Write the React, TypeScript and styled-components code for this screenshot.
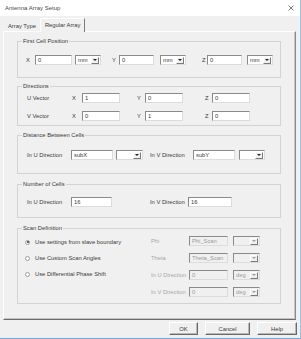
import React from "react";
import styled, { createGlobalStyle } from "styled-components";

const Global = createGlobalStyle`
  html, body { margin: 0; padding: 0; background: #ffffff; }
  body {
    width: 301px; height: 339px; overflow: hidden;
    font-family: "Liberation Sans", Arial, sans-serif;
  }
`;

const Window = styled.div`
  width: 301px; height: 339px; box-sizing: border-box;
  background: #f0f0f0;
  border-right: 1px solid #9fc3e6;
  border-bottom: 1px solid #6fa6dc;
  display: flex; flex-direction: column;
  font-size: 5.8px; color: #3a3a3a;
`;

const TitleBar = styled.div`
  height: 16px; flex: none; background: #ffffff;
  display: flex; align-items: center; justify-content: space-between;
  padding: 0 6px 0 5px;
`;

const TitleText = styled.span`
  font-size: 6px; color: #4a4a4a;
`;

const TabStrip = styled.div`
  height: 15px; flex: none;
  display: flex; align-items: flex-end;
  padding-left: 4px;
`;

const Tab = styled.div<{ $active?: boolean }>`
  box-sizing: border-box;
  height: ${(p) => (p.$active ? 14 : 12)}px;
  padding: 0 ${(p) => (p.$active ? 4 : 3)}px;
  display: flex; align-items: center;
  padding-bottom: ${(p) => (p.$active ? 2 : 0)}px;
  background: #f0f0f0;
  border-top: 1px solid ${(p) => (p.$active ? "#ffffff" : "transparent")};
  border-left: 1px solid ${(p) => (p.$active ? "#ffffff" : "transparent")};
  border-right: 1px solid ${(p) => (p.$active ? "#7c7c7c" : "transparent")};
  margin-bottom: ${(p) => (p.$active ? -1 : 0)}px;
  position: relative; z-index: ${(p) => (p.$active ? 1 : 0)};
`;

const Panel = styled.div`
  box-sizing: border-box;
  margin: 0 4px 0 3px;
  height: 289px; flex: none;
  border-top: 1px solid #ffffff;
  border-left: 1px solid #ffffff;
  border-right: 1px solid #8a8a8a;
  border-bottom: 1px solid #6a6a6a;
  box-shadow: inset -1px -1px 0 #c4c4c4;
  padding: 9px 14px 0 13px;
  display: flex; flex-direction: column;
`;

const GroupBox = styled.div<{ $mt?: number; $pt: number; $pb: number; $pl?: number }>`
  position: relative;
  box-sizing: border-box;
  margin-top: ${(p) => p.$mt ?? 0}px;
  border: 1px solid #d3d3d3;
  padding: ${(p) => p.$pt}px 4px ${(p) => p.$pb}px ${(p) => p.$pl ?? 9}px;
  display: flex; flex-direction: column;
`;

const Caption = styled.span`
  position: absolute; top: -4px; left: 4px;
  padding: 0 1px; background: #f0f0f0;
  line-height: 7px; white-space: nowrap;
`;

const Stack = styled.div<{ $gap: number }>`
  display: flex; flex-direction: column; gap: ${(p) => p.$gap}px;
`;

const Row = styled.div`
  display: flex; align-items: center; height: 10px;
`;

const Label = styled.span<{ $w: number; $ml?: number; $dim?: boolean }>`
  flex: none; width: ${(p) => p.$w}px; margin-left: ${(p) => p.$ml ?? 0}px;
  white-space: nowrap; overflow: visible;
  color: ${(p) => (p.$dim ? "#a8a8a8" : "#3a3a3a")};
`;

const TextBox = styled.div<{ $w: number; $ml?: number; $disabled?: boolean }>`
  flex: none; box-sizing: border-box;
  width: ${(p) => p.$w}px; height: 10px; margin-left: ${(p) => p.$ml ?? 0}px;
  background: ${(p) => (p.$disabled ? "#f0f0f0" : "#ffffff")};
  border-top: 1px solid #8a8a8a;
  border-left: 1px solid #8a8a8a;
  border-right: 1px solid #dcdcdc;
  border-bottom: 1px solid #dcdcdc;
  padding-left: 2px;
  display: flex; align-items: center;
  color: ${(p) => (p.$disabled ? "#9a9a9a" : "#3a3a3a")};
  white-space: nowrap; overflow: hidden;
`;

const ComboBox = styled(TextBox)`
  padding-right: 1px;
  justify-content: space-between;
`;

const DropButton = styled.span<{ $disabled?: boolean }>`
  flex: none; box-sizing: border-box;
  width: 8px; height: 7px;
  background: #f0f0f0;
  border-top: 1px solid #ffffff; border-left: 1px solid #ffffff;
  border-right: 1px solid #7a7a7a; border-bottom: 1px solid #7a7a7a;
  display: flex; align-items: center; justify-content: center;
  &::after {
    content: "";
    border-left: 2px solid transparent; border-right: 2px solid transparent;
    border-top: 2px solid ${(p) => (p.$disabled ? "#a0a0a0" : "#222")};
  }
`;

const RadioRow = styled.label`
  display: flex; align-items: center; height: 10px; gap: 5px;
`;

const RadioDot = styled.span<{ $checked?: boolean }>`
  flex: none; box-sizing: border-box;
  width: 5px; height: 5px; border-radius: 50%;
  border: 1px solid #9a9a9a; background: #ffffff;
  display: flex; align-items: center; justify-content: center;
  &::after {
    content: "";
    width: 2px; height: 2px; border-radius: 50%;
    background: ${(p) => (p.$checked ? "#333" : "transparent")};
  }
`;

const ScanBody = styled.div`
  display: flex;
`;

const RadioColumn = styled.div`
  width: 126px; flex: none;
  display: flex; flex-direction: column; gap: 6px; padding-top: 1px;
`;

const ButtonRow = styled.div`
  flex: none; display: flex; justify-content: flex-end; gap: 7px;
  padding: 2px 3px 0 0;
`;

const Button = styled.button<{ $w: number }>`
  box-sizing: border-box; width: ${(p) => p.$w}px; height: 13px;
  font: inherit; font-size: 5.8px; color: #3a3a3a;
  background: #f0f0f0;
  border-top: 1px solid #ffffff; border-left: 1px solid #ffffff;
  border-right: 1px solid #6a6a6a; border-bottom: 1px solid #6a6a6a;
  box-shadow: inset -1px -1px 0 #b8b8b8;
  padding: 0;
`;

function Combo({ w, ml, value = "", disabled }: { w: number; ml?: number; value?: string; disabled?: boolean }) {
  return (
    <ComboBox $w={w} $ml={ml} $disabled={disabled}>
      <span>{value}</span>
      <DropButton $disabled={disabled} />
    </ComboBox>
  );
}

const scanRight = [
  { label: "Phi", value: "Phi_Scan", unit: "" },
  { label: "Theta", value: "Theta_Scan", unit: "" },
  { label: "In U Direction", value: "0", unit: "deg" },
  { label: "In V Direction", value: "0", unit: "deg" },
];

export default function App() {
  return (
    <>
      <Global />
      <Window>
        <TitleBar>
          <TitleText>Antenna Array Setup</TitleText>
          <svg width="6" height="6" viewBox="0 0 6 6">
            <path d="M0.5 0.5 L5.5 5.5 M5.5 0.5 L0.5 5.5" stroke="#555" strokeWidth="0.8" />
          </svg>
        </TitleBar>
        <TabStrip>
          <Tab>Array Type</Tab>
          <Tab $active>Regular Array</Tab>
        </TabStrip>
        <Panel>
          <GroupBox $pt={13} $pb={12} $pl={8}>
            <Caption>First Cell Position</Caption>
            <Row>
              <Label $w={9}>X</Label>
              <TextBox $w={37}>0</TextBox>
              <Combo w={26} ml={3} value="mm" />
              <Label $w={7} $ml={11}>Y</Label>
              <TextBox $w={35}>0</TextBox>
              <Combo w={26} ml={6} value="mm" />
              <Label $w={5} $ml={16}>Z</Label>
              <TextBox $w={35}>0</TextBox>
              <Combo w={26} ml={5} value="mm" />
            </Row>
          </GroupBox>

          <GroupBox $mt={8} $pt={6} $pb={4}>
            <Caption>Directions</Caption>
            <Stack $gap={8}>
              {[
                ["U Vector", "1", "0", "0"],
                ["V Vector", "0", "1", "0"],
              ].map(([name, x, y, z]) => (
                <Row key={name}>
                  <Label $w={45}>{name}</Label>
                  <Label $w={10}>X</Label>
                  <TextBox $w={38}>{x}</TextBox>
                  <Label $w={8} $ml={17}>Y</Label>
                  <TextBox $w={38}>{y}</TextBox>
                  <Label $w={7} $ml={22}>Z</Label>
                  <TextBox $w={38}>{z}</TextBox>
                </Row>
              ))}
            </Stack>
          </GroupBox>

          <GroupBox $mt={9} $pt={14} $pb={13}>
            <Caption>Distance Between Cells</Caption>
            <Row>
              <Label $w={44}>In U Direction</Label>
              <TextBox $w={42}>subX</TextBox>
              <Combo w={27} ml={3} />
              <Label $w={43} $ml={7}>In V Direction</Label>
              <TextBox $w={42}>subY</TextBox>
              <Combo w={26} ml={4} />
            </Row>
          </GroupBox>

          <GroupBox $mt={10} $pt={12} $pb={10}>
            <Caption>Number of Cells</Caption>
            <Row>
              <Label $w={44}>In U Direction</Label>
              <TextBox $w={41}>16</TextBox>
              <Label $w={38} $ml={38}>In V Direction</Label>
              <TextBox $w={44}>16</TextBox>
            </Row>
          </GroupBox>

          <GroupBox $mt={10} $pt={7} $pb={6} $pl={7}>
            <Caption>Scan Definition</Caption>
            <ScanBody>
              <RadioColumn>
                <RadioRow><RadioDot $checked />Use settings from slave boundary</RadioRow>
                <RadioRow><RadioDot />Use Custom Scan Angles</RadioRow>
                <RadioRow><RadioDot />Use Differential Phase Shift</RadioRow>
              </RadioColumn>
              <Stack $gap={7}>
                {scanRight.map((r) => (
                  <Row key={r.label}>
                    <Label $w={38} $dim>{r.label}</Label>
                    <TextBox $w={39} $disabled>{r.value}</TextBox>
                    <Combo w={27} ml={5} value={r.unit} disabled />
                  </Row>
                ))}
              </Stack>
            </ScanBody>
          </GroupBox>
        </Panel>
        <ButtonRow>
          <Button $w={29}>OK</Button>
          <Button $w={45}>Cancel</Button>
          <Button $w={40}>Help</Button>
        </ButtonRow>
      </Window>
    </>
  );
}
